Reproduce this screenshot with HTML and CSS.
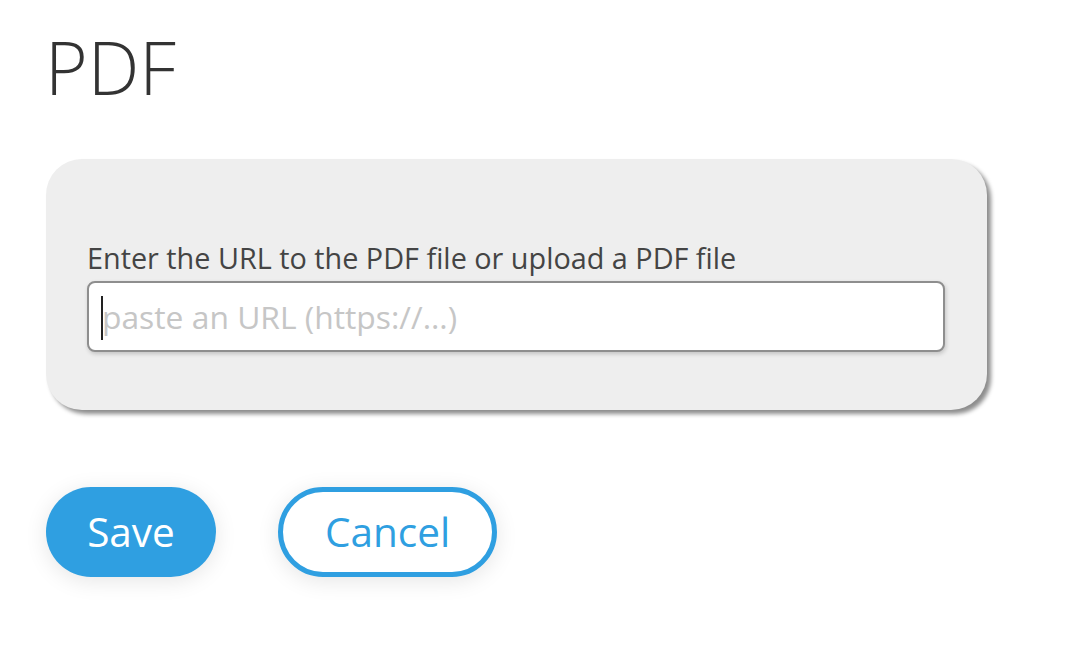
FILE: index.html
```html
<!DOCTYPE html>
<html lang="en">
<head>
<meta charset="utf-8">
<title>PDF</title>
<link rel="stylesheet" href="styles.css">
</head>
<body>
<main class="page">
  <h1 class="title">PDF</h1>
  <section class="card">
    <label class="field-label" for="pdf-url">Enter the URL to the PDF file or upload a PDF file</label>
    <div class="input-box">
      <span class="caret"></span>
      <input id="pdf-url" class="url-input" type="text" placeholder="paste an URL (https://...)">
    </div>
  </section>
  <div class="actions">
    <button class="btn btn-primary" type="button">Save</button>
    <button class="btn btn-secondary" type="button">Cancel</button>
  </div>
</main>
</body>
</html>
```

FILE: styles.css
```css
html, body {
  margin: 0;
  padding: 0;
  background: #ffffff;
}

body {
  font-family: "Open Sans", "Noto Sans", "Liberation Sans", sans-serif;
  color: #333333;
}

.page {
  padding: 30px 0 40px 46px;
  width: 941px;
}

.title {
  margin: 0;
  font-size: 73px;
  font-weight: 300;
  line-height: 73px;
  color: #333333;
  letter-spacing: 0;
  margin-left: -1px;
}

.card {
  margin-top: 56px;
  background: #eeeeee;
  border-radius: 36px;
  padding: 82px 42px 58px 41px;
  box-shadow: 4px 4px 4px rgba(0, 0, 0, 0.45);
  display: flex;
  flex-direction: column;
}

.field-label {
  display: block;
  font-size: 28.8px;
  line-height: 34px;
  color: #444444;
  margin-bottom: 6px;
  white-space: nowrap;
}

.input-box {
  position: relative;
  height: 71px;
  box-sizing: border-box;
  border: 2px solid #8e8e8e;
  border-radius: 8px;
  background: #ffffff;
  box-shadow: 1px 2px 4px rgba(0, 0, 0, 0.18);
  display: flex;
  align-items: center;
}

.url-input {
  flex: 1;
  border: none;
  outline: none;
  background: transparent;
  font-family: "Open Sans", "Noto Sans", sans-serif;
  font-size: 31.8px;
  color: #333333;
  padding: 0 0 0 13px;
  height: 100%;
}

.url-input::placeholder {
  color: #c6c6c6;
}

.caret {
  position: absolute;
  left: 12px;
  top: 13px;
  width: 2px;
  height: 44px;
  background: #222222;
}

.actions {
  display: flex;
  gap: 62px;
  margin-top: 77px;
}

.btn {
  height: 90px;
  border-radius: 45px;
  font-family: "Open Sans", "Noto Sans", sans-serif;
  font-size: 40.5px;
  line-height: 1;
  box-sizing: border-box;
  box-shadow: 0 4px 22px rgba(0, 0, 0, 0.1);
  cursor: pointer;
  padding: 0;
}

.btn-primary {
  width: 170px;
  background: #2f9fe1;
  color: #ffffff;
  border: none;
}

.btn-secondary {
  width: 219px;
  background: #ffffff;
  color: #2f9fe1;
  border: 5px solid #2f9fe1;
}
```
